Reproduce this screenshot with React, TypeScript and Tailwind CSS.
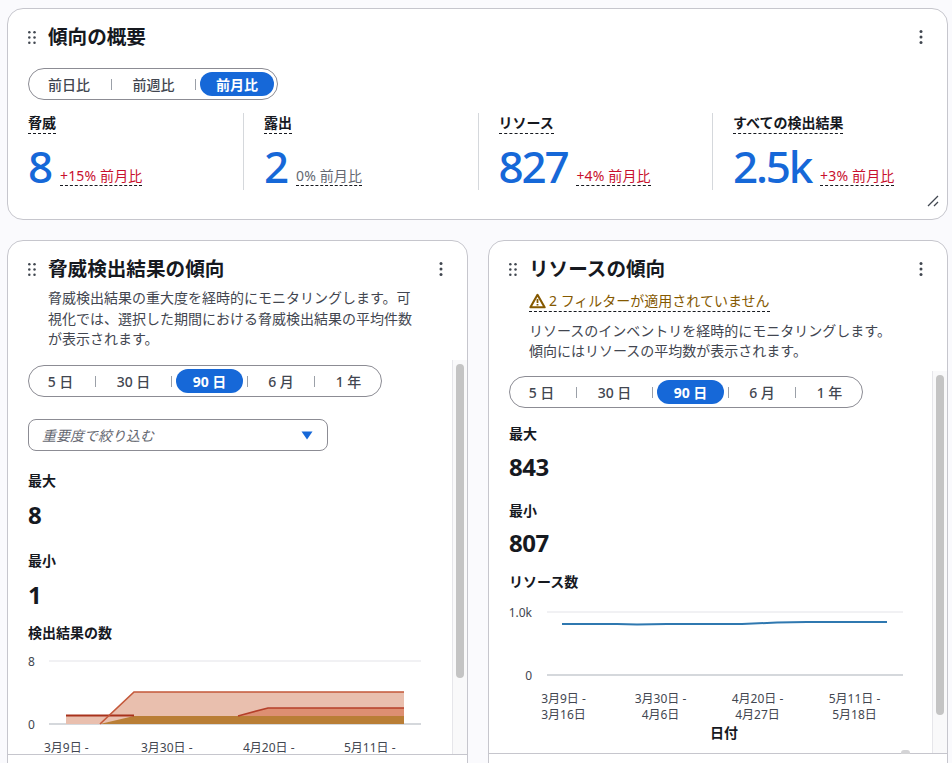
import React from "react";

function Grip() {
  return (
    <svg width="8" height="13" viewBox="0 0 8 13" className="shrink-0" fill="#414750">
      {[1.3, 6.5, 11.7].map((y) => (
        <g key={y}>
          <circle cx="1.3" cy={y} r="1.25" />
          <circle cx="6.5" cy={y} r="1.25" />
        </g>
      ))}
    </svg>
  );
}

function Kebab() {
  return (
    <svg width="4" height="14" viewBox="0 0 4 14" className="shrink-0" fill="#414750">
      <circle cx="2" cy="1.5" r="1.5" />
      <circle cx="2" cy="7" r="1.5" />
      <circle cx="2" cy="12.5" r="1.5" />
    </svg>
  );
}

function Header({ title }: { title: string }) {
  return (
    <div className="flex items-center">
      <Grip />
      <h2 className="ml-[12px] text-[19.6px] leading-[28px] font-bold text-[#16191f] flex-1">{title}</h2>
      <Kebab />
    </div>
  );
}

function Segmented({ items, active, widths }: { items: string[]; active: number; widths: string[] }) {
  return (
    <div className="inline-flex items-center h-[32px] border border-[#8c8c94] rounded-full px-[3px] bg-white">
      {items.map((it, i) => (
        <React.Fragment key={it}>
          {i > 0 && (
            <span
              className={
                i === active
                  ? "w-px h-[11px] bg-[#9ba0a8] mr-[4px]"
                  : i === active + 1
                  ? "w-px h-[11px] bg-[#9ba0a8] ml-[4px]"
                  : "w-px h-[11px] bg-[#9ba0a8]"
              }
            />
          )}
          <span
            className={
              (i === active
                ? "bg-[#1668d8] text-white font-bold rounded-full "
                : "text-[#424650] font-medium ") +
              widths[i] +
              " h-[24px] flex items-center justify-center text-[14px]"
            }
          >
            {it}
          </span>
        </React.Fragment>
      ))}
    </div>
  );
}

function Kpi({ label, value, delta, neutral, first }: { label: string; value: string; delta: string; neutral?: boolean; first?: boolean }) {
  return (
    <div className={first ? "w-[215px] shrink-0 h-[77px]" : "w-[234.5px] shrink-0 h-[77px] pl-[20px] border-l border-[#d5d8dc]"}>
      <div className="flex text-[14px] leading-[20px] font-bold text-[#16191f]">
        <span className="block border-b border-dashed border-[#16191f] h-[21px]">{label}</span>
      </div>
      <div className="flex items-end mt-[7px]">
        <span className="text-[44px] leading-[50px] text-[#1668d8] font-medium tracking-[-2.2px]">{value}</span>
        <span className={(neutral ? "text-[#656871] " : "text-[#c8102e] ") + "ml-[9px] mb-[5px] text-[14px] leading-[19px] tracking-[0.15px] border-b border-dashed border-[#16191f]"}>
          {delta}
        </span>
      </div>
    </div>
  );
}

function Stat({ label, value, cls, gap }: { label: string; value: string; cls?: string; gap: string }) {
  return (
    <div className={cls}>
      <div className="text-[14px] leading-[20px] font-bold text-[#16191f]">{label}</div>
      <div className={"text-[24px] leading-[32px] font-bold tracking-[-0.5px] text-[#16191f] " + gap}>{value}</div>
    </div>
  );
}

function Scrollbar({ thumb }: { thumb: string }) {
  return (
    <div className="w-[15px] shrink-0 border-l border-[#e6e6ea] pl-[3px] pt-[4px] bg-[#f9f9fa]">
      <div className={"w-[8px] rounded-full bg-[#c4c4c4] " + thumb} />
    </div>
  );
}

const periods = ["5 日", "30 日", "90 日", "6 月", "1 年"];
const pw = ["w-[63px] pr-[6px]", "w-[75px]", "w-[67px]", "w-[66px]", "w-[63px] pl-[4px]"];

export default function App() {
  return (
    <div
      className="w-[952px] h-[763px] overflow-hidden bg-[#fafafd] flex flex-col px-[7px] pt-[8px] gap-[20px]"
      style={{ fontFamily: '"Noto Sans", "Noto Sans CJK JP", sans-serif' }}
    >
      <section className="relative h-[212px] shrink-0 w-[941px] bg-white border border-[#c6c6cd] rounded-[16px] pl-[20px] pr-[24px] pt-[14px]">
        <Header title="傾向の概要" />
        <div className="mt-[17px]">
          <Segmented items={["前日比", "前週比", "前月比"]} active={2} widths={["w-[79px] pr-[5px]", "w-[83px]", "w-[74px]"]} />
        </div>
        <div className="flex mt-[13px]">
          <Kpi first label="脅威" value="8" delta="+15% 前月比" />
          <Kpi label="露出" value="2" delta="0% 前月比" neutral />
          <Kpi label="リソース" value="827" delta="+4% 前月比" />
          <Kpi label="すべての検出結果" value="2.5k" delta="+3% 前月比" />
        </div>
        <svg className="absolute right-[8px] bottom-[12px]" width="12" height="12" viewBox="0 0 12 12" stroke="#414750" strokeWidth="1.3" fill="none">
          <path d="M1 11 L11 1 M7 11 L11 7" />
        </svg>
      </section>

      <div className="flex gap-[20px] flex-1 min-h-0">
        <section className="w-[461px] h-[540px] shrink-0 bg-white border border-[#c6c6cd] rounded-t-[16px] flex flex-col">
          <div className="pl-[20px] pr-[24px] pt-[14px]">
            <Header title="脅威検出結果の傾向" />
            <p className="ml-[20px] mt-[5px] w-[368px] text-[14px] leading-[20.5px] text-[#424650]">
              脅威検出結果の重大度を経時的にモニタリングします。可視化では、選択した期間における脅威検出結果の平均件数が表示されます。
            </p>
          </div>
          <div className="flex h-[395px] mt-[10.5px] border-b border-[#c6c6cd] overflow-hidden">
            <div className="flex-1 pl-[20px] pt-[5px] overflow-hidden">
              <Segmented items={periods} active={2} widths={pw} />
              <div className="mt-[22px] w-[300px] h-[32px] border border-[#8c8c94] rounded-[8px] flex items-center px-[13px] justify-between">
                <span className="italic text-[14px] text-[#656871]">重要度で絞り込む</span>
                <svg width="12" height="9" viewBox="0 0 12 9" className="mr-[1px]" fill="#1668d8"><path d="M0.5 0.5 H11.5 L6 8.5 Z" /></svg>
              </div>
              <Stat cls="mt-[20px]" gap="mt-[8px]" label="最大" value="8" />
              <Stat cls="mt-[20px]" gap="mt-[8px]" label="最小" value="1" />
              <div className="mt-[12px] text-[14px] leading-[20px] font-bold text-[#16191f]">検出結果の数</div>
              <div className="mt-[11px] flex">
                <div className="w-[21px] flex flex-col justify-between h-[79px] text-[12px] leading-[16px] text-[#424650]">
                  <span>8</span>
                  <span>0</span>
                </div>
                <svg width="372" height="66" viewBox="0 0 372 66" className="mt-[6px] shrink-0">
                  <line x1="0" y1="1" x2="372" y2="1" stroke="#e3e3e8" />
                  <line x1="0" y1="64" x2="372" y2="64" stroke="#d5d8dc" strokeWidth="2" />
                  <path d="M17 56 H81 V64 H17 Z" fill="#e9bfae" />
                  <path d="M51 64 L85 32 H355 V64 Z" fill="#e9bfae" />
                  <path d="M189 56 L219 48 H355 V64 H189 Z" fill="#dd8f72" />
                  <path d="M51 64 L85 56 H355 V64 Z" fill="#b97e36" />
                  <path d="M17 55.5 H85" stroke="#a8321c" strokeWidth="1.8" fill="none" />
                  <path d="M51 64 L85 32 H355" stroke="#c4583a" strokeWidth="1.7" fill="none" />
                  <path d="M189 56 L219 48 H355" stroke="#b5402a" strokeWidth="1.7" fill="none" />
                </svg>
              </div>
              <div className="flex text-[12px] leading-[14px] text-[#424650] mt-[8px] ml-[16px] whitespace-nowrap">
                <span className="w-[97px]">3月9日 -</span>
                <span className="w-[102px]">3月30日 -</span>
                <span className="w-[101px]">4月20日 -</span>
                <span>5月11日 -</span>
              </div>
            </div>
            <Scrollbar thumb="h-[314px]" />
          </div>
          <div className="flex-1" />
        </section>

        <section className="relative w-[460px] h-[540px] shrink-0 bg-white border border-[#c6c6cd] rounded-t-[16px] flex flex-col">
          <div className="pl-[20px] pr-[24px] pt-[14px]">
            <Header title="リソースの傾向" />
            <div className="ml-[20px] mt-[7px] flex text-[#855900] text-[14px] leading-[20px]">
              <span className="flex items-center h-[22px] border-b border-dashed border-[#16191f] gap-[3px]">
                <svg width="17" height="16" viewBox="0 0 17 16" fill="none" stroke="#855900" strokeWidth="2.1" strokeLinejoin="round">
                  <path d="M8.5 1.8 L15.6 14.3 H1.4 Z" />
                  <path d="M8.5 6 V10 M8.5 11 V12.6" strokeWidth="1.8" />
                </svg>
                2 フィルターが適用されていません
              </span>
            </div>
            <p className="ml-[20px] mt-[9px] text-[14px] leading-[20px] text-[#424650] w-[368px]">
              リソースのインベントリを経時的にモニタリングします。傾向にはリソースの平均数が表示されます。
            </p>
          </div>
          <div className="flex h-[383px] mt-[10px] border-b border-[#c6c6cd] overflow-hidden">
            <div className="flex-1 pl-[20px] pt-[5px] overflow-hidden">
              <Segmented items={periods} active={2} widths={pw} />
              <Stat cls="mt-[16px]" gap="mt-[7px]" label="最大" value="843" />
              <Stat cls="mt-[18px]" gap="mt-[6px]" label="最小" value="807" />
              <div className="mt-[13px] text-[14px] leading-[20px] font-bold text-[#16191f]">リソース数</div>
              <div className="mt-[13px] flex">
                <div className="w-[38px] flex flex-col justify-between items-end pr-[15px] h-[79px] text-[12px] leading-[16px] text-[#424650]">
                  <span>1.0k</span>
                  <span>0</span>
                </div>
                <svg width="356" height="65" viewBox="0 0 356 65" className="mt-[6px] shrink-0">
                  <line x1="0" y1="1" x2="356" y2="1" stroke="#e3e3e8" />
                  <line x1="0" y1="64" x2="356" y2="64" stroke="#d5d8dc" strokeWidth="2" />
                  <path d="M15 13 H70 L90 13.5 L120 13 H195 L230 11.5 L260 11 H340" stroke="#2f78b0" strokeWidth="2" fill="none" />
                </svg>
              </div>
              <div className="flex text-[12px] leading-[15.5px] text-[#424650] mt-[7px] ml-[6px] text-center whitespace-nowrap">
                <span className="w-[97px]">3月9日 -<br />3月16日</span>
                <span className="w-[97px]">3月30日 -<br />4月6日</span>
                <span className="w-[97px]">4月20日 -<br />4月27日</span>
                <span className="w-[97px]">5月11日 -<br />5月18日</span>
              </div>
              <div className="mt-[1px] text-center text-[14px] leading-[20px] font-bold text-[#16191f] w-[430px]">日付</div>
            </div>
            <Scrollbar thumb="h-[340px]" />
          </div>
          <div className="absolute left-[412px] top-[509px] w-[9px] h-[4px] rounded-t-[3px] bg-[#d4d4d6]" />
          <div className="flex-1" />
        </section>
      </div>
    </div>
  );
}
